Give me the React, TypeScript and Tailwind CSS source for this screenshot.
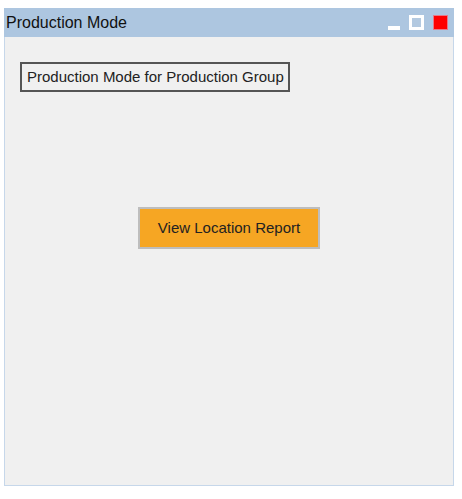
import React from "react";

export default function App() {
  return (
    <div className="w-[462px] h-[499px] bg-white pt-[8px] pl-[4px]" style={{ fontFamily: '"Liberation Sans", Arial, sans-serif' }}>
      <div className="w-[450px] h-[478px] flex flex-col">
        <div className="h-[29px] bg-[#adc6e0] flex items-center justify-between pl-[2px] pr-[6px]">
          <span className="text-[16px] text-[#111] leading-none">Production Mode</span>
          <div className="flex items-center gap-[9px]">
            <div className="w-[12px] h-[4px] bg-white mt-[10px]" />
            <div className="w-[15px] h-[15px] border-[3px] border-white bg-[#b3c9e0]" />
            <div className="w-[15px] h-[15px] bg-[#ff0000] border border-[#e67a8a]" />
          </div>
        </div>
        <div className="flex-1 bg-[#f0f0f0] border border-t-0 border-[#c6d7ea] relative">
          <div className="mt-[25px] ml-[15px] w-[270px] h-[30px] border-2 border-[#555] flex items-center pl-[5px] text-[15px] text-[#222]">
            Production Mode for Production Group
          </div>
          <div className="mt-[115px] ml-[133px] w-[182px] h-[42px] bg-[#f6a623] border-2 border-[#bdbdbd] flex items-center justify-center text-[15px] text-[#222]">
            View Location Report
          </div>
        </div>
      </div>
    </div>
  );
}
